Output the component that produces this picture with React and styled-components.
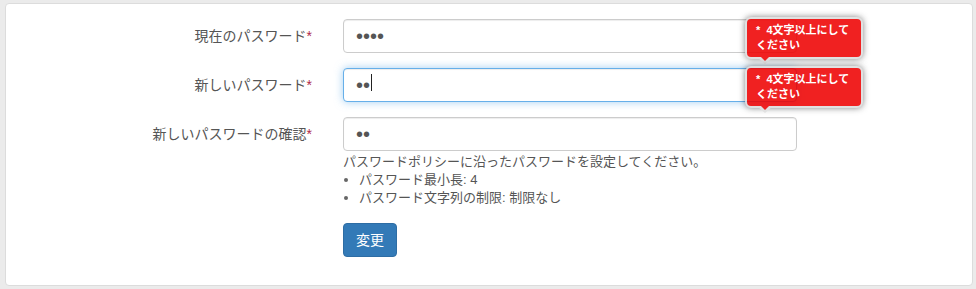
import React from 'react'
import styled, { createGlobalStyle } from 'styled-components'

const Global = createGlobalStyle`
  html, body {
    margin: 0;
    background: #ebebeb;
  }
  body {
    font-family: "Liberation Sans", "Noto Sans CJK JP", sans-serif;
    color: #555;
  }
`

const Page = styled.div`
  padding: 3px 3px 3px 5px;
`

const Panel = styled.div`
  background: #fff;
  border: 1px solid #dcdcdc;
  border-radius: 4px;
  padding: 15px 0 29px 0;
  height: 283px;
  box-sizing: border-box;
`

const Row = styled.div`
  display: grid;
  grid-template-columns: 337px 454px;
  margin-bottom: ${p => p.$gap || 15}px;
`

const Label = styled.label`
  text-align: right;
  padding: 7px 31px 0 0;
  font-size: 14px;
  line-height: 20px;
  color: #555;
`

const Req = styled.span`
  color: #b0284a;
`

const Field = styled.div`
  position: relative;
`

const Input = styled.input`
  display: block;
  width: 100%;
  height: 34px;
  box-sizing: border-box;
  padding: 4px 12px;
  font-size: 20px;
  font-family: "Liberation Sans", sans-serif;
  color: #555;
  background: #fff;
  border: 1px solid ${p => (p.$focus ? '#66afe9' : '#ccc')};
  border-radius: 4px;
  box-shadow: ${p =>
    p.$focus
      ? 'inset 0 1px 1px rgba(0,0,0,.075), 0 0 8px rgba(102,175,233,.6)'
      : 'inset 0 1px 1px rgba(0,0,0,.075)'};
  outline: none;
`

const Caret = styled.span`
  position: absolute;
  left: 28px;
  top: 6px;
  width: 1px;
  height: 17px;
  background: #222;
`

const Bubble = styled.div`
  position: absolute;
  left: 402px;
  top: -2px;
  opacity: 0.87;
  z-index: 2;
`

const BubbleBody = styled.div`
  width: 118px;
  box-sizing: border-box;
  background: #ee0101;
  border: 2px solid #ddd;
  border-radius: 6px;
  box-shadow: 0 0 6px rgba(0, 0, 0, 0.55);
  color: #fff;
  font-family: "Liberation Sans", "Noto Sans CJK JP", sans-serif;
  font-size: 11px;
  font-weight: bold;
  line-height: 15px;
  padding: 4px 9px;
  white-space: nowrap;
`

const Arrow = styled.div`
  position: absolute;
  left: 12px;
  top: 40px;
  width: 0;
  height: 0;
  border-left: 8px solid transparent;
  border-right: 8px solid transparent;
  border-top: 7px solid #ddd;

  &::after {
    content: '';
    position: absolute;
    left: -6px;
    top: -9px;
    border-left: 6px solid transparent;
    border-right: 6px solid transparent;
    border-top: 6px solid #ee0101;
  }
`

const Help = styled.div`
  font-size: 13px;
  line-height: 18px;
  margin-top: 2px;
  color: #555;
`

const List = styled.ul`
  margin: 0;
  padding-left: 16px;
  li::marker {
    color: #666;
  }
`

const Button = styled.button`
  height: 34px;
  padding: 6px 12px;
  font-size: 14px;
  font-family: "Liberation Sans", "Noto Sans CJK JP", sans-serif;
  color: #fff;
  background: #337ab7;
  border: 1px solid #2e6da4;
  border-radius: 4px;
  line-height: 20px;
`

const Tip = () => (
  <Bubble>
    <BubbleBody>
      *&nbsp; 4文字以上にして
      <br />
      ください
    </BubbleBody>
    <Arrow />
  </Bubble>
)

export default function App() {
  return (
    <Page>
      <Global />
      <Panel>
        <Row>
          <Label>現在のパスワード<Req>*</Req></Label>
          <Field>
            <Input type="password" defaultValue="aaaa" />
            <Tip />
          </Field>
        </Row>
        <Row>
          <Label>新しいパスワード<Req>*</Req></Label>
          <Field>
            <Input type="password" defaultValue="aa" $focus />
            <Caret />
            <Tip />
          </Field>
        </Row>
        <Row $gap={16}>
          <Label>新しいパスワードの確認<Req>*</Req></Label>
          <Field>
            <Input type="password" defaultValue="aa" />
            <Help>
              パスワードポリシーに沿ったパスワードを設定してください。
              <List>
                <li>パスワード最小長: 4</li>
                <li>パスワード文字列の制限: 制限なし</li>
              </List>
            </Help>
          </Field>
        </Row>
        <Row>
          <div />
          <div>
            <Button>変更</Button>
          </div>
        </Row>
      </Panel>
    </Page>
  )
}
